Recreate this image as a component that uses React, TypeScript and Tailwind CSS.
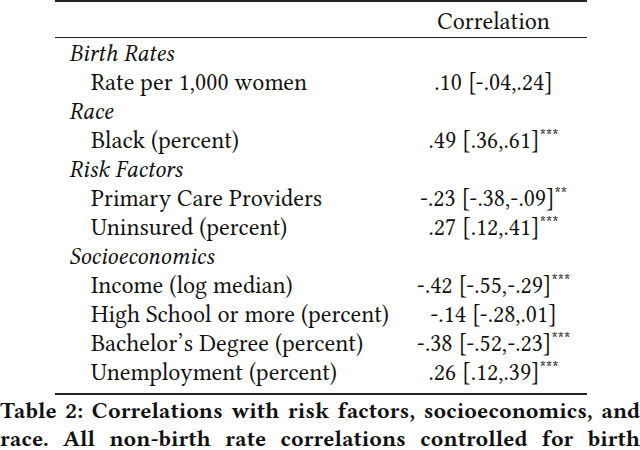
import React from "react";

type Row = { label: string; cat?: boolean; val?: string; stars?: string };

const rows: Row[] = [
  { label: "Birth Rates", cat: true },
  { label: "Rate per 1,000 women", val: ".10 [-.04,.24]" },
  { label: "Race", cat: true },
  { label: "Black (percent)", val: ".49 [.36,.61]", stars: "***" },
  { label: "Risk Factors", cat: true },
  { label: "Primary Care Providers", val: "-.23 [-.38,-.09]", stars: "**" },
  { label: "Uninsured (percent)", val: ".27 [.12,.41]", stars: "***" },
  { label: "Socioeconomics", cat: true },
  { label: "Income (log median)", val: "-.42 [-.55,-.29]", stars: "***" },
  { label: "High School or more (percent)", val: "-.14 [-.28,.01]" },
  { label: "Bachelor\u2019s Degree (percent)", val: "-.38 [-.52,-.23]", stars: "***" },
  { label: "Unemployment (percent)", val: ".26 [.12,.39]", stars: "***" },
];

export default function App() {
  return (
    <div
      className="w-[640px] bg-white text-[#111] overflow-hidden"
      style={{ fontFamily: '"Libertinus Serif", "Liberation Serif", serif' }}
    >
      <div className="ml-[55px] w-[532px]">
        <div className="border-t-2 border-[#222]" />
        <div className="grid grid-cols-[345px_187px] h-[36px] items-center border-b-[1.5px] border-[#222] text-[24px]">
          <div />
          <div className="text-center pt-[2px]">Correlation</div>
        </div>
        <div className="flex flex-col pt-[1px] pb-[6px]">
          {rows.map((r, i) => (
            <div
              key={i}
              className="grid grid-cols-[345px_187px] h-[29px] items-center text-[24px] leading-none"
            >
              <div className={r.cat ? "pl-[14px] italic" : "pl-[36px]"}>{r.label}</div>
              <div className="text-center whitespace-nowrap">
                {r.val}
                {r.stars && (
                  <span className="text-[17px] relative -top-[6px]">{r.stars}</span>
                )}
              </div>
            </div>
          ))}
        </div>
        <div className="border-t-2 border-[#222]" />
      </div>
      <div className="pt-[2px] font-bold text-[23px] leading-[28px]">
        <div className="text-justify [text-align-last:justify] whitespace-nowrap">
          Table 2: Correlations with risk factors, socioeconomics, and
        </div>
        <div className="text-justify [text-align-last:justify] whitespace-nowrap">
          race. All non-birth rate correlations controlled for birth
        </div>
      </div>
    </div>
  );
}
